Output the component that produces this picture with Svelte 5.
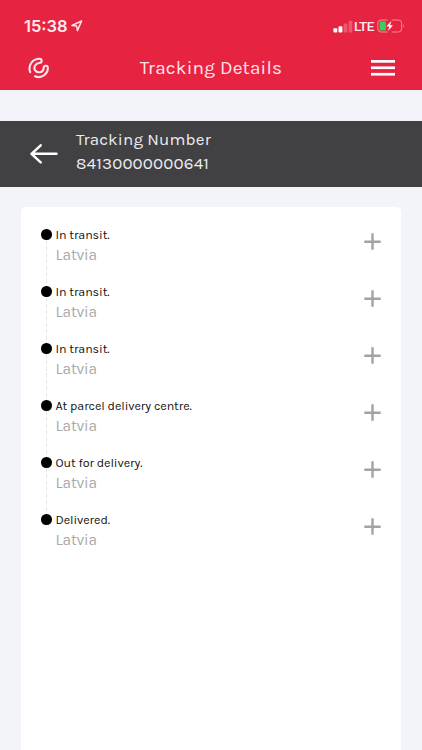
<script>
  const events = [
    { status: 'In transit.', place: 'Latvia' },
    { status: 'In transit.', place: 'Latvia' },
    { status: 'In transit.', place: 'Latvia' },
    { status: 'At parcel delivery centre.', place: 'Latvia' },
    { status: 'Out for delivery.', place: 'Latvia' },
    { status: 'Delivered.', place: 'Latvia' }
  ];
</script>

<div class="screen">
  <header>
    <div class="status-bar">
      <div class="clock">
        <span class="time">15:38</span>
        <svg width="12" height="12" viewBox="0 0 12 12" fill="none" stroke="#ffe3e8" stroke-width="1.5" stroke-linejoin="round">
          <path d="M1 5.5 10.6 1 6.4 10.6 5.7 6.1Z" />
        </svg>
      </div>
      <div class="signals">
        <svg width="20" height="13" viewBox="0 0 20 13" fill="#fff">
          <rect x="0.4" y="8.3" width="3.9" height="4.2" rx="0.8" />
          <rect x="5.5" y="6.2" width="3.9" height="6.3" rx="0.8" />
          <rect x="10.6" y="3.6" width="3.7" height="8.9" rx="0.8" opacity="0.25" />
          <rect x="15.6" y="0.8" width="3.7" height="11.7" rx="0.8" opacity="0.25" />
        </svg>
        <span class="network">LTE</span>
        <svg width="28" height="14" viewBox="0 0 28 14">
          <path d="M10.6 1H4A3.2 3.2 0 0 0 .8 4.2V9.8A3.2 3.2 0 0 0 4 13H10.6M14.8 1H21.4A3.2 3.2 0 0 1 24.6 4.2V9.8A3.2 3.2 0 0 1 21.4 13H14.8" fill="none" stroke="#f48a9a" />
          <path d="M26.2 4.9Q28 7 26.2 9.1Z" fill="#f48a9a" />
          <rect x="2.6" y="2.6" width="6.2" height="8.8" rx="1.2" fill="#3ace5c" />
          <path d="M14.3 2 9.3 7.5H12.2L11 12 16 6.3H13.1Z" fill="#fff" />
        </svg>
      </div>
    </div>
    <div class="title-bar">
      <svg class="logo" width="22" height="22" viewBox="0 0 22 22" fill="none" stroke="#ffe3e8" stroke-width="2.1" stroke-linecap="round">
        <path d="M2.2 15.2C-.3 8.4 4.6 1.7 11.4 1.7C14.4 1.7 14.4 6 11.4 6C7.6 6.1 5.4 10.1 6.9 13C8.8 16.4 15.5 16.2 15.7 10.6C15.9 8 20 8 19.9 11.1C19.6 17.6 12.6 21.8 7 19.3" />
      </svg>
      <h1>Tracking Details</h1>
      <svg class="menu" width="24" height="16" viewBox="0 0 24 16" fill="#fff">
        <rect x="0" y="0" width="24" height="2.7" />
        <rect x="0" y="6.4" width="24" height="2.7" />
        <rect x="0" y="12.9" width="24" height="2.7" />
      </svg>
    </div>
  </header>

  <section class="tracking">
    <svg width="28" height="20" viewBox="0 0 28 20" fill="none" stroke="#fff" stroke-width="2.5" stroke-linecap="round" stroke-linejoin="round">
      <path d="M26.5 9.8H1.5M10.7 1.3 1.5 9.8 10.7 18.3" />
    </svg>
    <div class="tracking-text">
      <div>Tracking Number</div>
      <div>84130000000641</div>
    </div>
  </section>

  <main>
    <ul>
      {#each events as event}
        <li>
          <div class="rail">
            <span class="dot"></span>
            <span class="line"></span>
          </div>
          <div class="details">
            <div class="status">{event.status}</div>
            <div class="place">{event.place}</div>
          </div>
          <svg width="17" height="17" viewBox="0 0 17 17" stroke="#a3a3a5" stroke-width="2.4">
            <path d="M8.5 .3V16.7M.3 8.8H16.7" />
          </svg>
        </li>
      {/each}
    </ul>
  </main>
</div>

<style>
  :global(body) {
    margin: 0;
    background: #f3f4f9;
  }
  .screen {
    width: 422px;
    height: 750px;
    display: flex;
    flex-direction: column;
    overflow: hidden;
    background: #f3f4f9;
    font-family: Karla, "Noto Sans", sans-serif;
  }
  svg {
    display: block;
    flex: none;
  }
  header {
    height: 90px;
    flex: none;
    background: #e62340;
    color: #fff;
  }
  .status-bar {
    height: 45px;
    box-sizing: border-box;
    padding: 15px 17px 0 24px;
    display: flex;
    justify-content: space-between;
    align-items: flex-start;
  }
  .clock,
  .signals {
    height: 22px;
    display: flex;
    align-items: center;
  }
  .time {
    width: 47px;
    font: 600 16.5px/22px Inter, sans-serif;
    color: #ffe9ed;
  }
  .network {
    width: 23px;
    margin-left: 1px;
    font: 500 13.5px/22px Roboto, sans-serif;
    letter-spacing: -0.6px;
    color: #ffe9ed;
  }
  .title-bar {
    height: 45px;
    padding: 0 27px 0 28px;
    display: flex;
    justify-content: space-between;
    align-items: center;
  }
  h1 {
    margin: 0;
    padding-left: 1px;
    font-size: 19px;
    font-weight: 400;
    line-height: 24px;
    letter-spacing: 0.2px;
    color: #ffe3e8;
  }
  .tracking {
    height: 66px;
    margin-top: 31px;
    flex: none;
    box-sizing: border-box;
    padding-left: 30px;
    display: flex;
    align-items: center;
    gap: 18px;
    background: #414143;
    color: #ececed;
  }
  .tracking-text {
    font-size: 17px;
    line-height: 24px;
    letter-spacing: 0.14px;
    padding-bottom: 7px;
  }
  main {
    flex: 1;
    margin: 20px 21px 0;
    border-radius: 5px 5px 0 0;
    background: #fff;
  }
  ul {
    margin: 0;
    padding: 19px 20px 0;
    list-style: none;
  }
  li {
    height: 57px;
    display: flex;
    align-items: flex-start;
  }
  li > svg {
    margin-top: 7px;
  }
  .rail {
    width: 11px;
    height: 57px;
    padding-top: 3px;
    box-sizing: border-box;
    display: flex;
    flex-direction: column;
    align-items: center;
    flex: none;
  }
  .dot {
    width: 10.5px;
    height: 10.5px;
    border-radius: 50%;
    background: #000;
    flex: none;
  }
  .line {
    width: 1px;
    height: 47px;
    flex: none;
    background: repeating-linear-gradient(#e6e6e8 0 4px, #fff 4px 6.5px);
  }
  li:last-child .line {
    display: none;
  }
  .details {
    flex: 1;
    padding-left: 3.5px;
  }
  .status {
    padding-top: 1px;
    font-size: 12.5px;
    line-height: 17px;
    letter-spacing: -0.08px;
    color: #111;
  }
  .place {
    font-size: 15.5px;
    line-height: 20px;
    margin-top: 1px;
    letter-spacing: -0.2px;
    color: #a9a9ac;
  }
</style>
